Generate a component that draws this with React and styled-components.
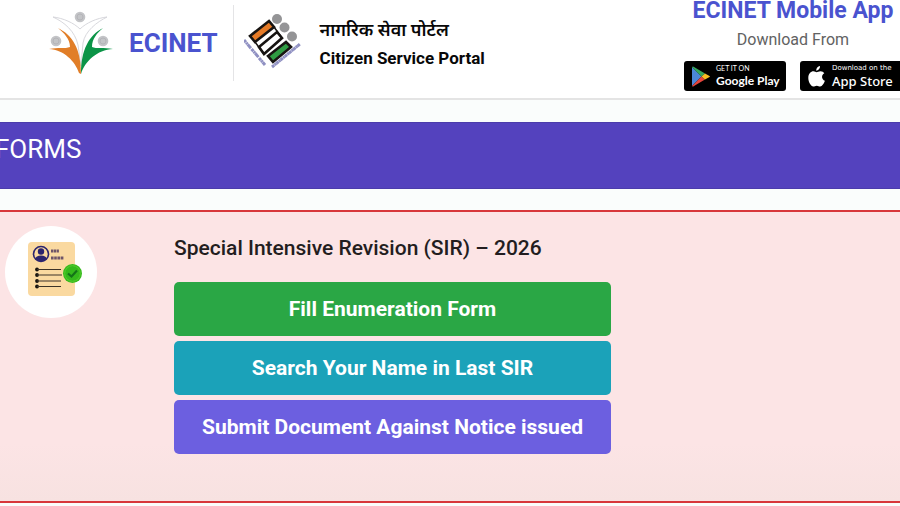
import React from "react";
import styled, { createGlobalStyle } from "styled-components";

const actions = [
  { label: "Fill Enumeration Form", color: "#2aa745" },
  { label: "Search Your Name in Last SIR", color: "#1ba2b9" },
  { label: "Submit Document Against Notice issued", color: "#6c5fe0" },
];

export default function App() {
  return (
    <Page>
      <GlobalStyle />
      <Header>
        <Brand href="#home">
          <PeopleLogo />
          ECINET
        </Brand>
        <Portal>
          <BallotLogo />
          <PortalNames>
            <HindiName lang="hi">नागरिक सेवा पोर्टल</HindiName>
            <EnglishName>Citizen Service Portal</EnglishName>
          </PortalNames>
        </Portal>
        <MobileApp>
          <AppTitle>ECINET Mobile App</AppTitle>
          <AppHint>Download From</AppHint>
          <Stores>
            <StoreLink href="#google-play" $gap={5}>
              <PlayIcon />
              <span>
                <PlayCaption>GET IT ON</PlayCaption>
                <PlayName>Google Play</PlayName>
              </span>
            </StoreLink>
            <StoreLink href="#app-store" $gap={7}>
              <AppleIcon />
              <span>
                <AppleCaption>Download on the</AppleCaption>
                <AppleName>App Store</AppleName>
              </span>
            </StoreLink>
          </Stores>
        </MobileApp>
      </Header>
      <main>
        <Banner>
          <BannerTitle>FORMS</BannerTitle>
        </Banner>
        <Panel>
          <IconCircle>
            <FormIcon />
          </IconCircle>
          <PanelBody>
            <PanelTitle>Special Intensive Revision (SIR) – 2026</PanelTitle>
            <ActionList>
              {actions.map((action) => (
                <ActionButton
                  type="button"
                  key={action.label}
                  $color={action.color}
                >
                  {action.label}
                </ActionButton>
              ))}
            </ActionList>
          </PanelBody>
        </Panel>
      </main>
    </Page>
  );
}

function PeopleLogo() {
  return (
    <svg width="64" height="64" viewBox="0 0 64 64" aria-hidden="true">
      <g fill="#c3c4c7">
        <circle cx="30" cy="6" r="5.3" />
        <circle cx="6" cy="30" r="5.3" />
        <circle cx="53" cy="30" r="5.3" />
      </g>
      <g fill="none" stroke="#b4b4b8" strokeWidth="1">
        <circle cx="30" cy="6" r="3" />
        <circle cx="6" cy="30" r="3" />
        <circle cx="53" cy="30" r="3" />
      </g>
      <path
        d="M3 6C13 7 24 12 30 18C36 12 47 7 57 6C47 11 35 20 33 32L31 55L28 34C25 20 14 11 3 6Z"
        fill="#fff"
        stroke="#d3d3d8"
        strokeWidth="0.9"
      />
      <path
        d="M8 17C22 24 31 37 31 63L29 62C25 50 14 39 -1 38C8 36 15 38 20 36C20 28 14 22 8 17Z"
        fill="#e17e28"
      />
      <path
        d="M53 17C39 24 31 39 31 63C35 50 47 39 63 38C54 36 46 38 42 36C42 28 47 22 53 17Z"
        fill="#0b9447"
      />
    </svg>
  );
}

function BallotLogo() {
  return (
    <svg width="58" height="58" viewBox="0 0 58 58" aria-hidden="true">
      <g fill="#949496">
        <circle cx="33" cy="6" r="5" />
        <circle cx="40.500" cy="14.500" r="5" />
        <circle cx="48" cy="23.500" r="5" />
      </g>
      <g stroke="#171412" strokeWidth="2.600">
        <path d="M6 23L25 8L30 14L11 29Z" fill="#e57a26" />
        <path d="M15 34L33 19L38 25L20 41Z" fill="#fff" />
        <path d="M24 43L42 29L47 34L29 49Z" fill="#2f9c43" />
      </g>
      <path d="M11 29L20 41M30 14L38 25" stroke="#171412" strokeWidth="1.500" />
      <g fill="none" stroke="#8f90c2">
        <path d="M0 27L21 52" strokeWidth="3" strokeDasharray="3 .4 2 .3 5 1" />
        <path d="M28 54L56 31" strokeWidth="3" strokeDasharray="3 .3 2 .2" />
      </g>
    </svg>
  );
}

function PlayIcon() {
  return (
    <svg width="19" height="21" viewBox="0 0 19 21" aria-hidden="true">
      <path d="M0 1L9.500 10.500L0 20Z" fill="#4b87d9" />
      <path d="M0 1Q1 0 2 1L13 7.500L9.500 10.500Z" fill="#35a85c" />
      <path d="M0 20Q1 21 2 20L13 13.500L9.500 10.500Z" fill="#e5443b" />
      <path d="M13 7.500L17.500 10Q18.500 10.500 17.500 11L13 13.500L9.500 10.500Z" fill="#f6bd22" />
    </svg>
  );
}

function AppleIcon() {
  return (
    <svg width="17" height="21" viewBox="0 0 17 21" aria-hidden="true">
      <path
        d="M12 0C12.200 2.500 10.300 4.700 8.200 4.700C8 2.400 9.900 .3 12 0ZM8.600 6.200C9.600 6.200 10.600 5.200 12.500 5.200C14.200 5.200 15.500 6 16.300 7.200C13 9.100 13.500 13.400 16.900 14.800C16 17.300 14.200 20.500 12.200 20.500C10.900 20.500 10.300 19.700 8.800 19.700C7.200 19.700 6.500 20.500 5.300 20.500C3 20.500 .3 16 .3 12C.3 7.700 2.900 5.300 5.500 5.300C6.900 5.300 7.900 6.200 8.600 6.200Z"
        fill="#fff"
      />
    </svg>
  );
}

function FormIcon() {
  return (
    <svg width="56" height="54" viewBox="0 0 56 54" aria-hidden="true">
      <rect x="1" y="0" width="47" height="54" rx="4" fill="#fad9a0" />
      <circle cx="14" cy="12" r="7.500" fill="#fad9a0" stroke="#2b246e" strokeWidth="1.600" />
      <circle cx="14" cy="9.500" r="3.200" fill="#2b246e" />
      <path d="M8 17Q9 13.500 14 13.500Q19 13.500 20 17Q14 22 8 17Z" fill="#2b246e" />
      <g fill="none" stroke="#6e5468" strokeWidth="3">
        <path d="M24 9H32" strokeDasharray="2.300 .5" />
        <path d="M24 16H37" strokeDasharray="2.600 .6" />
      </g>
      <g fill="#15120f">
        <circle cx="10" cy="27.500" r="1.900" />
        <circle cx="10" cy="33" r="1.900" />
        <circle cx="10" cy="39" r="1.900" />
        <circle cx="10" cy="44.500" r="1.900" />
      </g>
      <path
        d="M10 27.500H34M10 33H35M10 39H34M10 44.500H34"
        stroke="#3c3328"
        strokeWidth="1.200"
      />
      <circle cx="45.500" cy="31.500" r="9.500" fill="#35b91c" />
      <circle cx="45.500" cy="31.500" r="7.800" fill="none" stroke="#54cd2e" />
      <path d="M41 31.500L44.500 34.500L50 28.500" fill="none" stroke="#147318" strokeWidth="2.200" />
    </svg>
  );
}

const GlobalStyle = createGlobalStyle`
  * {
    box-sizing: border-box;
  }
  body {
    margin: 0;
    font-family: Roboto, sans-serif;
    background: #fafdfc;
  }
`;

const Page = styled.div`
  min-height: 100vh;
  overflow: hidden;
`;

const Header = styled.header`
  display: flex;
  align-items: flex-start;
  height: 100px;
  border-bottom: 2px solid #e4e4e4;
  background: white;
`;

const Brand = styled.a`
  display: flex;
  align-items: center;
  gap: 15px;
  height: 76px;
  margin-top: 5px;
  padding: 0 15px 0 50px;
  border-right: 1px solid #e4e4e6;
  color: #4a53cf;
  font-size: 26px;
  font-weight: 700;
  text-decoration: none;

  svg {
    overflow: visible;
  }
`;

const Portal = styled.div`
  display: flex;
  align-items: flex-start;
  gap: 18px;
  padding: 13px 0 0 10px;
`;

const PortalNames = styled.div`
  padding-top: 3px;
  color: #080808;
  line-height: 28px;
`;

const HindiName = styled.div`
  font-family: Roboto, "Noto Sans Devanagari", sans-serif;
  font-size: 18px;
  font-weight: 600;
`;

const EnglishName = styled.div`
  font-size: 17px;
  font-weight: 700;
`;

const MobileApp = styled.div`
  flex-shrink: 0;
  margin: 0 -2px 0 auto;
  text-align: center;
`;

const AppTitle = styled.h2`
  margin: 0;
  color: #4a53cf;
  font-size: 23px;
  font-weight: 700;
  line-height: 22px;
`;

const AppHint = styled.p`
  margin: 0;
  padding: 6px 0 10px;
  color: #626262;
  font-size: 16px;
  line-height: 23px;
`;

const Stores = styled.div`
  display: flex;
  justify-content: center;
  gap: 14px;
`;

const StoreLink = styled.a`
  display: flex;
  align-items: center;
  gap: ${(props) => props.$gap}px;
  width: 102px;
  height: 30px;
  padding-left: 8px;
  border-radius: 3px;
  background: black;
  color: white;
  text-align: left;
  text-decoration: none;
  white-space: nowrap;

  svg {
    flex-shrink: 0;
  }
`;

const StoreCaption = styled.span`
  display: block;
  font-size: 7px;
  line-height: 9px;
`;

const PlayCaption = styled(StoreCaption)`
  font-family: Lato, sans-serif;
`;

const AppleCaption = styled(StoreCaption)`
  font-family: "DejaVu Sans", sans-serif;
`;

const StoreName = styled.span`
  display: block;
  line-height: 16px;
`;

const PlayName = styled(StoreName)`
  font-family: Lato, sans-serif;
  font-size: 12px;
  font-weight: 700;
`;

const AppleName = styled(StoreName)`
  font-family: "Noto Sans", sans-serif;
  font-size: 13px;
  font-weight: 500;
`;

const Banner = styled.div`
  height: 67px;
  margin: 22px 0 21px;
  padding-top: 11px;
  border: solid #4b3cab;
  border-width: 1px 0;
  background: #5442be;
`;

const BannerTitle = styled.h1`
  margin: 0 0 0 -5px;
  color: white;
  font-size: 26px;
  font-weight: 400;
  line-height: 30px;
`;

const Panel = styled.section`
  display: flex;
  gap: 77px;
  padding: 14px 5px 47px;
  border: solid #d8373b;
  border-width: 2px 0;
  background: linear-gradient(#fce4e5 80%, #f7e2e1);
`;

const IconCircle = styled.div`
  display: flex;
  flex-shrink: 0;
  align-items: center;
  justify-content: center;
  width: 92px;
  height: 92px;
  padding-left: 8px;
  padding-bottom: 6px;
  border-radius: 50%;
  background: white;
`;

const PanelBody = styled.div`
  flex: 1;
  padding-top: 8px;
`;

const PanelTitle = styled.h2`
  margin: 0 0 20px;
  color: #231d20;
  font-size: 21px;
  font-weight: 500;
  line-height: 28px;
`;

const ActionList = styled.div`
  display: flex;
  flex-direction: column;
  gap: 5px;
  max-width: 437px;
`;

const ActionButton = styled.button`
  height: 54px;
  border: 0;
  border-radius: 5px;
  background: ${(props) => props.$color};
  color: white;
  font-family: inherit;
  font-size: 21px;
  font-weight: 700;
  cursor: pointer;
`;
